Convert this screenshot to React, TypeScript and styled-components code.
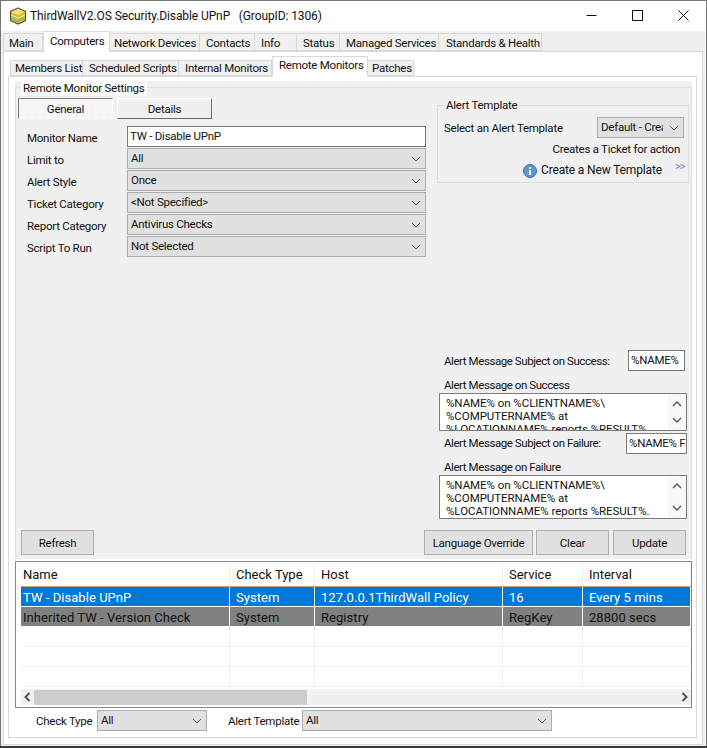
import React from 'react';
import styled, { createGlobalStyle } from 'styled-components';

const Global = createGlobalStyle`
  html, body { margin: 0; padding: 0; background: #3a3a3a; }
  body { font-family: Roboto, "Noto Sans", sans-serif; font-size: 11.5px; letter-spacing: -0.25px; color: #111; overflow: hidden; }
  * { box-sizing: border-box; }
`;

const Win = styled.div`
  width: 707px; height: 746px; background: #f0f0f0; border: 1px solid #767676; border-bottom: 0;
  display: flex; flex-direction: column; overflow: hidden;
`;
const TitleBar = styled.div`
  height: 30px; background: #fff; display: flex; align-items: center; padding-left: 8px; flex: none;
`;
const TitleText = styled.span`font-size: 12px; margin-left: 3px; letter-spacing: -0.1px; white-space: pre;`;
const WinButtons = styled.div`margin-left: auto; display: flex; align-items: flex-start; align-self: flex-start;`;
const WinButton = styled.span`width: 46px; height: 29px; display: flex; align-items: center; justify-content: center;`;

const TabRow = styled.div`display: flex; align-items: flex-end; padding-left: ${p => p.$pad}px; height: 20px; flex: none; position: relative; z-index: 1;`;
const Tab = styled.div`
  width: ${p => p.$w}px;
  height: ${p => (p.$active ? 21 : p.$h)}px;
  margin-bottom: ${p => (p.$active ? -1 : 0)}px;
  background: ${p => (p.$active ? '#fff' : '#f0f0f0')};
  border: 1px solid #d9d9d9; border-left-width: ${p => (p.$active ? 1 : 0)}px;
  border-bottom-color: ${p => (p.$active ? '#fff' : '#d9d9d9')};
  padding-top: ${p => (p.$active ? 1 : p.$pt)}px;
  padding-left: ${p => p.$tx}px;
  white-space: nowrap; line-height: ${p => p.$lh}px;
  &:first-child { border-left-width: 1px; }
`;
const MainPanel = styled.div`
  margin-left: 2px; width: 700px; height: 694px; background: #fff; border: 1px solid #d9d9d9; padding: 4px 0 0 4px; flex: none;
  display: flex; flex-direction: column;
`;
const SubPanel = styled.div`
  width: 689px; height: 662px; border: 1px solid #d9d9d9; background: #fff; padding: 4px 0 0 6px; flex: none; display: flex; flex-direction: column;
`;
const GreyPanel = styled.div`
  width: 677px; height: 478px; background: #f0f0f0; padding: 6px 0 0 0; flex: none; display: flex; flex-direction: column;
`;
const Fieldset = styled.div`
  position: relative; width: 677px; height: 472px; border: 1px solid #dedede; border-bottom: 0; padding: 0 5px;
  display: flex; flex-direction: column;
`;
const Legend = styled.span`
  position: absolute; top: -7px; left: 5px; background: #fafafa; padding: 0 2px 1px; line-height: 14px; white-space: nowrap;
`;
const ToggleRow = styled.div`display: flex; gap: 4px; margin-top: 10px; margin-left: -3px;`;
const Toggle = styled.div`
  width: 95px; height: 21px; text-align: center; line-height: 21px; background: ${p => (p.$on ? '#f6f6f6' : '#f0f0f0')};
  border: 1px solid; border-color: ${p => (p.$on ? '#7a7a7a #fff #fff #7a7a7a' : '#fff #6b6b6b #6b6b6b #fff')};
  ${p => p.$on ? 'background-image: repeating-conic-gradient(#fff 0 25%, #f0f0f0 0 50%); background-size: 2px 2px;' : ''}
`;
const TopGrid = styled.div`display: flex;`;
const FormGrid = styled.div`
  display: grid; grid-template-columns: 100px 299px; row-gap: 1px; margin-top: 7px; margin-left: 6px; grid-auto-rows: 21px; align-items: center;
`;
const FormLabel = styled.span`white-space: nowrap; padding-top: 3px;`;
const TextBox = styled.div`
  height: 21px; width: ${p => (p.$w ? p.$w + 'px' : 'auto')}; margin-top: ${p => p.$top || 0}px; background: #fff; border: 1px solid #7a7a7a; padding: 0 2px; line-height: 18px; white-space: nowrap; overflow: hidden;
`;
const Combo = styled.div`
  height: 21px; width: ${p => (p.$w ? p.$w + 'px' : 'auto')}; background: #e1e1e1; border: 1px solid #adadad; padding: 0 3px;
  display: flex; align-items: center; justify-content: space-between; white-space: nowrap; overflow: hidden; flex: none;
`;
const ComboText = styled.span`flex: 1; min-width: 0; overflow: hidden; margin-top: -1px;`;
const Chevron = styled.svg`flex: none; margin: 0 1px 0 6px;`;
const TemplateGroup = styled.div`
  position: relative; width: 252px; height: 78px; margin: -14px 0 0 11px; border: 1px solid #dcdcdc; padding: 11px 4px 0 6px; display: flex; flex-direction: column;
`;
const TemplateLegend = styled.span`position: absolute; top: -8px; left: 6px; background: #f0f0f0; padding: 0 2px 1px; line-height: 15px;`;
const TemplateRow = styled.div`display: flex; align-items: center; justify-content: space-between;`;
const TemplateLabel = styled.span`white-space: nowrap;`;
const TemplateNote = styled.div`text-align: right; padding-right: 4px; margin-top: 1px; line-height: 20px; white-space: nowrap;`;
const NewTemplate = styled.div`display: flex; align-items: center; gap: 4px; padding-left: 79px; line-height: 21px; font-size: 12px; letter-spacing: -0.15px; white-space: nowrap; margin-top: 1px;`;
const InfoIcon = styled.svg`flex: none;`;
const More = styled.span`color: #7a7fc0; font-size: 11px; letter-spacing: -1px; margin-left: 9px; margin-top: -8px; line-height: 12px;`;
const AlertArea = styled.div`
  width: 248px; margin-left: 418px; margin-top: 93px; display: flex; flex-direction: column;
`;
const SubjectRow = styled.div`display: flex; align-items: center; justify-content: space-between; padding-left: 5px; padding-right: ${p => p.$right || 0}px; white-space: nowrap;`;
const SubjectLabel = styled.span`padding-top: 1px; letter-spacing: -0.43px;`;
const CapLabel = styled.div`padding-left: 5px; line-height: 17px; margin-top: ${p => p.$top || 0}px; height: 16px; white-space: nowrap; letter-spacing: -0.43px;`;
const MsgBox = styled.div`
  height: ${p => p.$h}px; border: 1px solid #7a7a7a; background: #fff; display: flex; overflow: hidden; flex: none;
`;
const MsgText = styled.div`flex: 1; padding: 0 0 0 6px; line-height: 13px; margin-top: 3px; white-space: pre; letter-spacing: -0.05px;`;
const MsgScroll = styled.div`width: 18px; flex: none; display: flex; flex-direction: column; justify-content: space-between; align-items: center; background: #f8f8f8; padding: 7px 0;`;
const ButtonBar = styled.div`display: flex; margin-top: 11px; align-items: center;`;
const Btn = styled.div`
  height: 25px; width: ${p => p.$w}px; margin-left: ${p => p.$ml || 0}px; background: #e1e1e1; border: 1px solid #adadad; text-align: center; line-height: 24px; white-space: nowrap;
`;
const ListBox = styled.div`
  width: 677px; height: 147px; margin-top: 2px; border: 1px solid #828790; background: #fff; padding: 1px 0 0 5px; flex: none; display: flex; flex-direction: column;
`;
const GridRow = styled.div`
  display: grid; grid-template-columns: 209px 85px 188px 80px 108px; height: ${p => p.$h}px; background: ${p => p.$bg || '#fff'}; color: ${p => p.$fg || '#111'};
  border-bottom: 1px solid ${p => p.$rule || '#f0f0f0'}; flex: none;
`;
const GridCell = styled.div`
  padding: 0 0 0 6px; line-height: 21px; white-space: nowrap; overflow: hidden; border-right: 1px solid ${p => p.$line || '#efefef'}; font-size: 13px; letter-spacing: 0.05px;
  &:first-child { padding-left: 2px; }
`;
const HeadCell = styled(GridCell)`line-height: 24px; letter-spacing: 0;`;
const HScroll = styled.div`
  height: 16px; margin-top: 2px; background: #f0f0f0; display: flex; align-items: center; flex: none; width: 670px;
`;
const ScrollArrow = styled.svg`flex: none; margin: 0 3px;`;
const ScrollThumb = styled.div`width: 273px; height: 15px; background: #cdcdcd;`;
const ScrollRight = styled.svg`margin-left: auto; margin-right: 3px;`;
const FilterRow = styled.div`display: flex; align-items: center; margin-top: 2px; padding-left: 21px;`;
const FilterLabel = styled.span`width: ${p => p.$w}px; margin-left: ${p => p.$ml || 0}px; white-space: nowrap; padding-top: 1px;`;

const Down = () => (
  <Chevron width="10" height="6" viewBox="0 0 10 6"><path d="M1 1l4 4 4-4" fill="none" stroke="#555" strokeWidth="1" /></Chevron>
);

const mainTabs: [string, number, number][] = [['Main', 40, 5], ['Computers', 67, 6], ['Network Devices', 90, 4], ['Contacts', 55, 6], ['Info', 42, 6], ['Status', 43, 6], ['Managed Services', 99, 6], ['Standards & Health', 103, 7]];
const subTabs: [string, number, number][] = [['Members List', 73, 4], ['Scheduled Scripts', 96, 6], ['Internal Monitors', 93, 6], ['Remote Monitors', 96, 6], ['Patches', 46, 4]];
const fields = ['Limit to|All', 'Alert Style|Once', 'Ticket Category|<Not Specified>', 'Report Category|Antivirus Checks', 'Script To Run|Not Selected'];
const msg = '%NAME% on %CLIENTNAME%\\\n%COMPUTERNAME% at\n%LOCATIONNAME% reports %RESULT%.';

const UpDown = () => (
  <>
    <svg width="10" height="6" viewBox="0 0 10 6"><path d="M1 5l4-4 4 4" fill="none" stroke="#555" strokeWidth="1.4" /></svg>
    <svg width="10" height="6" viewBox="0 0 10 6"><path d="M1 1l4 4 4-4" fill="none" stroke="#555" strokeWidth="1.4" /></svg>
  </>
);

export default function App() {
  return (
    <Win>
      <Global />
      <TitleBar>
        <svg width="18" height="18" viewBox="0 0 18 18">
          <path d="M9 1l7.5 3.5v9L9 17l-7.5-3.5v-9z" fill="#d9b93a" stroke="#5f5a3a" strokeWidth="1.2" />
          <path d="M2.2 5L9 8.2 15.8 5 9 1.8z" fill="#f2e07a" />
          <path d="M2.2 9L9 12.2 15.8 9v4L9 16.2 2.2 13z" fill="#a9b84a" />
          <path d="M2.2 8L9 11.2 15.8 8" fill="none" stroke="#f7ee9a" strokeWidth="1.2" />
        </svg>
        <TitleText>ThirdWallV2.OS Security.Disable UPnP   (GroupID: 1306)</TitleText>
        <WinButtons>
          <WinButton><svg width="11" height="11" viewBox="0 0 11 11"><path d="M0.5 5.5h10" stroke="#111" /></svg></WinButton>
          <WinButton><svg width="11" height="11" viewBox="0 0 11 11"><rect x=".5" y=".5" width="10" height="10" fill="none" stroke="#111" /></svg></WinButton>
          <WinButton><svg width="11" height="11" viewBox="0 0 11 11"><path d="M.5.5l10 10M10.5.5l-10 10" stroke="#111" /></svg></WinButton>
        </WinButtons>
      </TitleBar>
      <TabRow $pad={2}>
        {mainTabs.map(([t, w, tx], i) => <Tab key={t} $w={w} $tx={tx} $h={18} $pt={1} $lh={17} $active={i === 1}>{t}</Tab>)}
      </TabRow>
      <MainPanel>
        <TabRow $pad={2}>
          {subTabs.map(([t, w, tx], i) => <Tab key={t} $w={w} $tx={tx} $h={16} $pt={0} $lh={15} $active={i === 3}>{t}</Tab>)}
        </TabRow>
        <SubPanel>
          <GreyPanel>
            <Fieldset>
              <Legend>Remote Monitor Settings</Legend>
              <ToggleRow>
                <Toggle $on>General</Toggle>
                <Toggle>Details</Toggle>
              </ToggleRow>
              <TopGrid>
                <FormGrid>
                  <FormLabel>Monitor Name</FormLabel>
                  <TextBox>TW - Disable UPnP</TextBox>
                  {fields.map(f => {
                    const [l, v] = f.split('|');
                    return (
                      <React.Fragment key={l}>
                        <FormLabel>{l}</FormLabel>
                        <Combo><ComboText>{v}</ComboText><Down /></Combo>
                      </React.Fragment>
                    );
                  })}
                </FormGrid>
                <TemplateGroup>
                  <TemplateLegend>Alert Template</TemplateLegend>
                  <TemplateRow>
                    <TemplateLabel>Select an Alert Template</TemplateLabel>
                    <Combo $w={87}><ComboText>Default - Create Ticket</ComboText><Down /></Combo>
                  </TemplateRow>
                  <TemplateNote>Creates a Ticket for action</TemplateNote>
                  <NewTemplate>
                    <InfoIcon width="14" height="14" viewBox="0 0 14 14">
                      <circle cx="7" cy="7" r="6.5" fill="#5b97d5" stroke="#3a6ea5" />
                      <rect x="6" y="6" width="2" height="5" fill="#fff" />
                      <rect x="6" y="3" width="2" height="2" fill="#fff" />
                    </InfoIcon>
                    Create a New Template
                    <More>&gt;&gt;</More>
                  </NewTemplate>
                </TemplateGroup>
              </TopGrid>
              <AlertArea>
                <SubjectRow $right={2}>
                  <SubjectLabel>Alert Message Subject on Success:</SubjectLabel>
                  <TextBox $w={57}>%NAME%</TextBox>
                </SubjectRow>
                <CapLabel $top={6}>Alert Message on Success</CapLabel>
                <MsgBox $h={38}>
                  <MsgText>{msg}</MsgText>
                  <MsgScroll><UpDown /></MsgScroll>
                </MsgBox>
                <SubjectRow>
                  <SubjectLabel>Alert Message Subject on Failure:</SubjectLabel>
                  <TextBox $w={61} $top={2}>%NAME% Fa</TextBox>
                </SubjectRow>
                <CapLabel $top={5}>Alert Message on Failure</CapLabel>
                <MsgBox $h={44}>
                  <MsgText>{msg}</MsgText>
                  <MsgScroll><UpDown /></MsgScroll>
                </MsgBox>
              </AlertArea>
              <ButtonBar>
                <Btn $w={73}>Refresh</Btn>
                <Btn $w={109} $ml={330}>Language Override</Btn>
                <Btn $w={73} $ml={3}>Clear</Btn>
                <Btn $w={73} $ml={4}>Update</Btn>
              </ButtonBar>
            </Fieldset>
          </GreyPanel>
          <ListBox>
            <GridRow $h={24} $rule="#c9a070">
              {['Name', 'Check Type', 'Host', 'Service', 'Interval'].map(h => <HeadCell key={h}>{h}</HeadCell>)}
            </GridRow>
            <GridRow $h={20} $bg="#0078d7" $fg="#fff" $rule="#fff">
              {['TW - Disable UPnP', 'System', '127.0.0.1ThirdWall Policy', '16', 'Every 5 mins'].map(c => <GridCell key={c} $line="#fff">{c}</GridCell>)}
            </GridRow>
            <GridRow $h={20} $bg="#808080" $fg="#111" $rule="#fff">
              {['Inherited TW - Version Check', 'System', 'Registry', 'RegKey', '28800 secs'].map(c => <GridCell key={c} $line="#fff">{c}</GridCell>)}
            </GridRow>
            {[0, 1, 2].map(r => (
              <GridRow key={r} $h={20}>
                {[0, 1, 2, 3, 4].map(c => <GridCell key={c} />)}
              </GridRow>
            ))}
            <HScroll>
              <ScrollArrow width="7" height="10" viewBox="0 0 7 10"><path d="M5.5 1L1.5 5l4 4" fill="none" stroke="#555" strokeWidth="2" /></ScrollArrow>
              <ScrollThumb />
              <ScrollRight width="7" height="10" viewBox="0 0 7 10"><path d="M1.5 1l4 4-4 4" fill="none" stroke="#555" strokeWidth="2" /></ScrollRight>
            </HScroll>
          </ListBox>
          <FilterRow>
            <FilterLabel $w={61}>Check Type</FilterLabel>
            <Combo $w={110}><ComboText>All</ComboText><Down /></Combo>
            <FilterLabel $w={74} $ml={21}>Alert Template</FilterLabel>
            <Combo $w={250}><ComboText>All</ComboText><Down /></Combo>
          </FilterRow>
        </SubPanel>
      </MainPanel>
    </Win>
  );
}
